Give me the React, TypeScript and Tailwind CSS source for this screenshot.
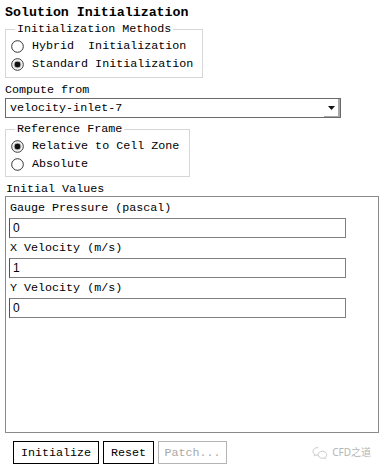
import React from 'react'

const mono = "font-['Liberation_Mono','DejaVu_Sans_Mono',monospace]"

function Radio({ checked, label }: { checked?: boolean; label: string }) {
  return (
    <div className="flex h-[18px] items-center">
      <svg width="13" height="13" viewBox="0 0 13 13" className="ml-[5px] mr-[8px] shrink-0">
        <circle cx="6.5" cy="6.5" r="5.8" fill="#fff" stroke="#333" strokeWidth="1" />
        {checked && <circle cx="6.5" cy="6.5" r="3" fill="#111" />}
        {checked && <circle cx="6.5" cy="6.5" r="3.6" fill="none" stroke="#999" strokeWidth="0.6" />}
      </svg>
      <span className="whitespace-pre leading-[18px]">{label}</span>
    </div>
  )
}

function Field({ label, value }: { label: string; value: string }) {
  return (
    <div className="ml-[3px]">
      <div className="h-[20px] leading-[20px] pl-[1px]">{label}</div>
      <div className="h-[20px] w-[337px] border border-[#7f7f7f] border-l-[#555] pl-[3px] text-[12px] leading-[18px] font-['Liberation_Sans',sans-serif]">
        {value}
      </div>
    </div>
  )
}

export default function App() {
  return (
    <div className={`relative h-[469px] w-[384px] overflow-hidden bg-white px-[5px] text-[11.7px] text-black ${mono}`}>
      {/* Title */}
      <div className="pt-[3px] h-[23px] leading-[20px] text-[13.3px] font-bold">Solution Initialization</div>

      {/* Initialization Methods */}
      <fieldset className="w-[198px] border border-[#d6d6d6] pt-[2px] pb-[4px]">
        <legend className="ml-[9px] px-[2px] leading-[12px]">Initialization Methods</legend>
        <Radio label="Hybrid  Initialization" />
        <Radio checked label="Standard Initialization" />
      </fieldset>

      {/* Compute from */}
      <div className="mt-[4px] leading-[16px]">Compute from</div>
      <div className="flex h-[20px] w-[336px] items-center border border-[#6a6a6a] pl-[4px]">
        <span className="flex-1 leading-[18px]">velocity-inlet-7</span>
        <div className="flex h-full w-[16px] items-center justify-center border-r-2 border-b border-[#a8a8a8]">
          <svg width="7" height="4" viewBox="0 0 7 4">
            <path d="M0 0H7L3.5 4Z" fill="#111" />
          </svg>
        </div>
      </div>

      {/* Reference Frame */}
      <fieldset className="mt-[5px] w-[185px] border border-[#d6d6d6] pt-[2px] pb-[3px]">
        <legend className="ml-[9px] px-[2px] leading-[12px]">Reference Frame</legend>
        <Radio checked label="Relative to Cell Zone" />
        <Radio label="Absolute" />
      </fieldset>

      {/* Initial Values */}
      <div className="mt-[6px] h-[13px] leading-[12px] pl-[1px]">Initial Values</div>
      <div className="h-[237px] w-[374px] border border-[#8a8a8a] pt-[1px]">
        <Field label="Gauge Pressure (pascal)" value="0" />
        <Field label="X Velocity (m/s)" value="1" />
        <Field label="Y Velocity (m/s)" value="0" />
      </div>

      {/* Buttons */}
      <div className="mt-[8px] flex items-center">
        <div className="ml-[8px] flex gap-[4px]">
          <button className="h-[23px] w-[86px] border border-black leading-[20px] shadow-[inset_0_0_0_1px_#fff]">Initialize</button>
          <button className="h-[23px] w-[51px] border border-black leading-[20px]">Reset</button>
          <button className="h-[23px] w-[69px] border border-[#b4b4b4] leading-[20px] text-[#a8a8a8]">Patch...</button>
        </div>
        <div className="ml-auto mr-[8px] flex items-center gap-[4px] text-[#b5b5b5] font-['Noto_Sans','Noto_Sans_CJK_SC',sans-serif] text-[10px]">
          <svg width="16" height="14" viewBox="0 0 16 14" fill="none" stroke="#c4c4c4" strokeWidth="0.9">
            <path d="M6 1.5C3 1.5 1 3.3 1 5.4c0 1.2.6 2.2 1.6 2.9L2.2 9.8l1.8-.9c.6.2 1.3.3 2 .3" />
            <path d="M10.5 5.2c-2.5 0-4.4 1.6-4.4 3.5s1.9 3.5 4.4 3.5c.5 0 1-.1 1.5-.2l1.4.8-.3-1.3c.9-.6 1.5-1.6 1.5-2.8 0-1.9-1.9-3.5-4.1-3.5Z" />
          </svg>
          <span>CFD之道</span>
        </div>
      </div>
    </div>
  )
}
